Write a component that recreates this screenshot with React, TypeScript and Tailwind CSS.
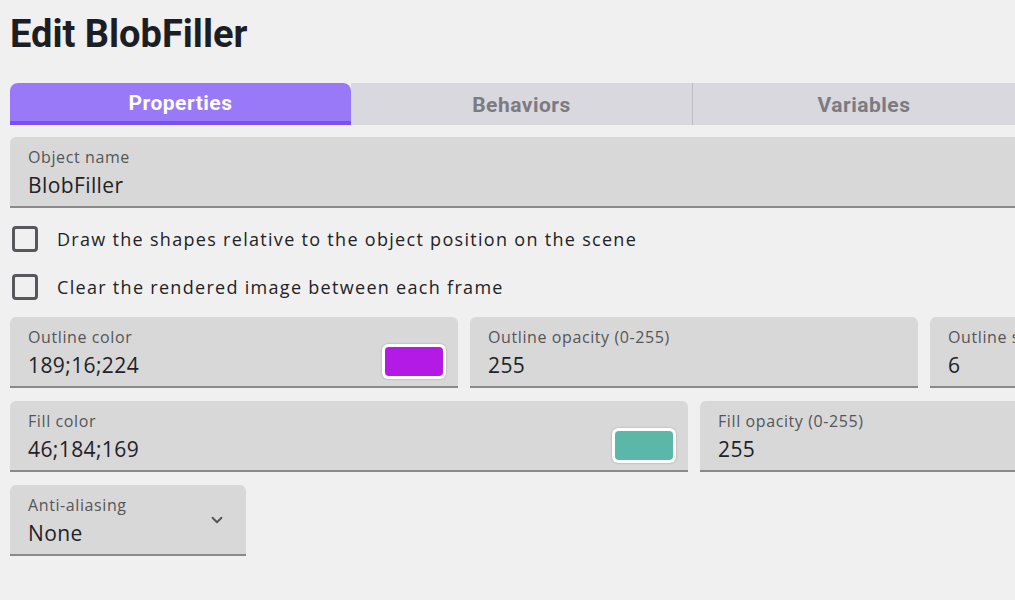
import { ChevronDown } from 'lucide-react'

const font = { fontFamily: '"Open Sans", "Noto Sans", sans-serif' }

function Field({
  label,
  value,
  width,
  swatch,
  select,
}: {
  label: string
  value: string
  width: string
  swatch?: string
  select?: boolean
}) {
  return (
    <div
      className={`${width} h-[71px] shrink-0 box-border bg-[#d8d8d8] rounded-t-[6px] border-b-2 border-[#8a8a8a] flex items-center pl-[18px] pr-[12px]`}
    >
      <div className="flex-1 flex flex-col pt-[2px]">
        <span className="text-[16px] leading-[20px] tracking-[0.6px] text-[#555558]">{label}</span>
        <span className="mt-[4px] text-[21px] leading-[28px] tracking-[0.4px] text-[#222226]">{value}</span>
      </div>
      {swatch && (
        <div className="mt-[20px] w-[64px] h-[35px] rounded-[6px] bg-white p-[3px] shadow-[0_0_2px_rgba(0,0,0,0.3)]">
          <div className="w-full h-full rounded-[4px]" style={{ backgroundColor: swatch }} />
        </div>
      )}
      {select && <ChevronDown className="w-[18px] h-[18px] text-[#555] mr-[8px]" strokeWidth={2.5} />}
    </div>
  )
}

function Check({ label }: { label: string }) {
  return (
    <div className="flex items-center h-[48px]">
      <div className="ml-[2px] w-[26px] h-[26px] box-border border-[3px] border-[#58585c] rounded-[4px]" />
      <span className="ml-[19px] text-[18px] tracking-[1.3px] text-[#222226]">{label}</span>
    </div>
  )
}

export default function App() {
  return (
    <div className="min-h-screen bg-[#f0f0f0] overflow-hidden" style={font}>
      <div className="w-[1388px] px-[10px]">
        <h1
          className="pt-[12px] h-[83px] text-[38px] leading-[44px] font-bold text-[#1d1d24]"
          style={{ fontFamily: 'Roboto, sans-serif' }}
        >
          Edit BlobFiller
        </h1>
        <div className="flex h-[42px] w-[1025px]" style={{ fontFamily: 'Roboto, sans-serif' }}>
          <div className="w-[341px] pt-[4px] rounded-t-[8px] bg-[#9979f7] border-b-4 border-[#7850f5] flex items-center justify-center text-[21px] tracking-[0.5px] font-bold text-white">
            Properties
          </div>
          <div className="w-[342px] pt-[4px] bg-[#d9d8de] border-r border-[#bdbcc2] flex items-center justify-center text-[21px] tracking-[0.5px] font-bold text-[#7c7b82]">
            Behaviors
          </div>
          <div className="w-[342px] pt-[4px] bg-[#d9d8de] flex items-center justify-center text-[21px] tracking-[0.5px] font-bold text-[#7c7b82]">
            Variables
          </div>
        </div>
        <div className="mt-[12px]">
          <Field label="Object name" value="BlobFiller" width="w-[1368px]" />
        </div>
        <div className="mt-[7px]">
          <Check label="Draw the shapes relative to the object position on the scene" />
          <Check label="Clear the rendered image between each frame" />
        </div>
        <div className="mt-[6px] flex gap-[12px]">
          <Field label="Outline color" value="189;16;224" width="w-[448px]" swatch="#b31ae6" />
          <Field label="Outline opacity (0-255)" value="255" width="w-[448px]" />
          <Field label="Outline size" value="6" width="w-[448px]" />
        </div>
        <div className="mt-[13px] flex gap-[12px]">
          <Field label="Fill color" value="46;184;169" width="w-[678px]" swatch="#5bb8a9" />
          <Field label="Fill opacity (0-255)" value="255" width="w-[678px]" />
        </div>
        <div className="mt-[13px]">
          <Field label="Anti-aliasing" value="None" width="w-[236px]" select />
        </div>
      </div>
    </div>
  )
}
